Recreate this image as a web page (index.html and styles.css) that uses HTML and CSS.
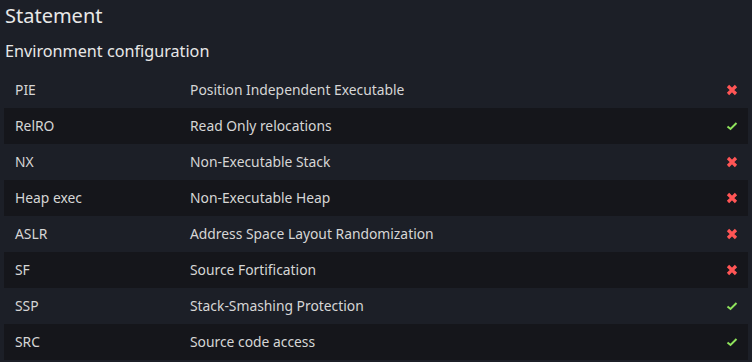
FILE: index.html
```html
<!DOCTYPE html>
<html>
<head>
<meta charset="utf-8">
<link rel="stylesheet" href="styles.css">
</head>
<body>
<h1 class="title">Statement</h1>
<h2 class="subtitle">Environment configuration</h2>
<div class="table">
  <div class="row"><span class="key">PIE</span><span class="desc">Position Independent Executable</span><span class="status no"><svg viewBox="0 0 12 12"><path d="M2 2L10 10M10 2L2 10"/></svg></span></div>
  <div class="row"><span class="key">RelRO</span><span class="desc">Read Only relocations</span><span class="status yes"><svg viewBox="0 0 12 12"><path d="M1.5 6.5L4.5 9L10.5 3"/></svg></span></div>
  <div class="row"><span class="key">NX</span><span class="desc">Non-Executable Stack</span><span class="status no"><svg viewBox="0 0 12 12"><path d="M2 2L10 10M10 2L2 10"/></svg></span></div>
  <div class="row"><span class="key">Heap exec</span><span class="desc">Non-Executable Heap</span><span class="status no"><svg viewBox="0 0 12 12"><path d="M2 2L10 10M10 2L2 10"/></svg></span></div>
  <div class="row"><span class="key">ASLR</span><span class="desc">Address Space Layout Randomization</span><span class="status no"><svg viewBox="0 0 12 12"><path d="M2 2L10 10M10 2L2 10"/></svg></span></div>
  <div class="row"><span class="key">SF</span><span class="desc">Source Fortification</span><span class="status no"><svg viewBox="0 0 12 12"><path d="M2 2L10 10M10 2L2 10"/></svg></span></div>
  <div class="row"><span class="key">SSP</span><span class="desc">Stack-Smashing Protection</span><span class="status yes"><svg viewBox="0 0 12 12"><path d="M1.5 6.5L4.5 9L10.5 3"/></svg></span></div>
  <div class="row"><span class="key">SRC</span><span class="desc">Source code access</span><span class="status yes"><svg viewBox="0 0 12 12"><path d="M1.5 6.5L4.5 9L10.5 3"/></svg></span></div>
</div>
</body>
</html>
```
FILE: styles.css
```css
html, body {
  margin: 0;
  padding: 0;
  background: #1c1f27;
  color: #d6d6d6;
  font-family: "Noto Sans", "Open Sans", sans-serif;
}
body {
  padding: 0 4px;
}
.title {
  margin: 0;
  font-size: 20px;
  font-weight: 400;
  line-height: 32px;
  padding-left: 1px;
  color: #e8e8e8;
}
.subtitle {
  margin: 0;
  font-size: 16.2px;
  font-weight: 400;
  line-height: 24px;
  padding: 7px 0 9px 1px;
  color: #e8e8e8;
}
.table {
  display: flex;
  flex-direction: column;
}
.row {
  display: flex;
  align-items: center;
  height: 36px;
  font-size: 13.85px;
  padding-bottom: 1px;
  box-sizing: border-box;
}
.row:nth-child(even) {
  background: #15161b;
}
.key {
  width: 175px;
  padding-left: 11px;
}
.desc {
  flex: 1;
}
.status {
  width: 22px;
  display: flex;
  align-items: center;
}
.status svg {
  width: 12px;
  height: 12px;
  fill: none;
  stroke-linecap: butt;
}
.no svg {
  stroke: #ff5555;
  stroke-width: 3.2;
}
.yes svg {
  stroke: #8fe35c;
  stroke-width: 2;
}
```
